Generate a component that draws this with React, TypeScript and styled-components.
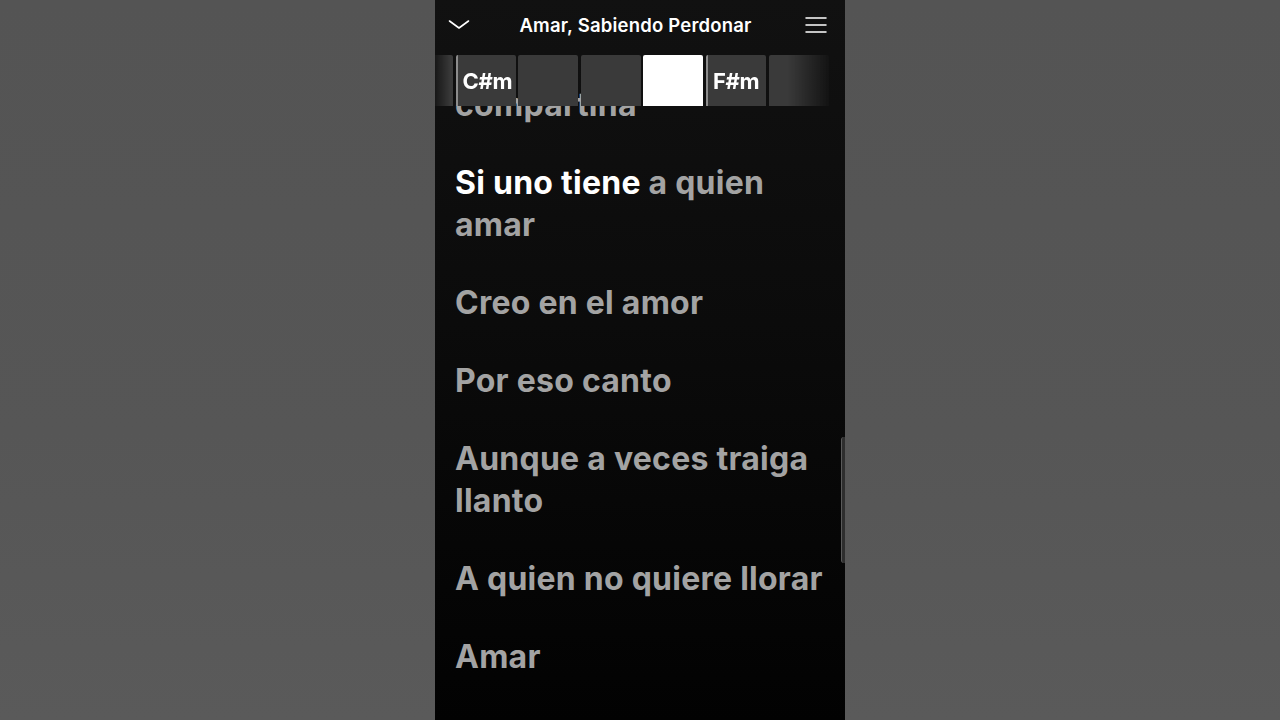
import React from 'react'
import styled, { createGlobalStyle } from 'styled-components'

type Tile = { chord?: string; active?: boolean; start?: boolean }

const tiles: Tile[] = [
    {},
    { chord: 'C#m', start: true },
    {},
    {},
    { active: true },
    { chord: 'F#m', start: true },
    {},
]

type Lyric = { sung?: string; rest: string }

const lyrics: Lyric[] = [
    { rest: 'compartina' },
    { sung: 'Si uno tiene', rest: ' a quien amar' },
    { rest: 'Creo en el amor' },
    { rest: 'Por eso canto' },
    { rest: 'Aunque a veces traiga llanto' },
    { rest: 'A quien no quiere llorar' },
    { rest: 'Amar' },
]

const App: React.FunctionComponent = () => (
    <>
        <GlobalStyle />
        <Page>
            <Phone>
                <Header>
                    <IconButton aria-label="Close">
                        <svg width="22" height="12" viewBox="0 0 22 12" fill="none">
                            <path d="M1.5 2 L11 9 L20.5 2" stroke="#fff" strokeWidth="1.6" strokeLinecap="round" strokeLinejoin="round" />
                        </svg>
                    </IconButton>
                    <Title>Amar, Sabiendo Perdonar</Title>
                    <IconButton aria-label="Menu">
                        <svg width="22" height="18" viewBox="0 0 22 18" fill="none">
                            <path d="M1 2h20M1 9h20M1 16h20" stroke="#fff" strokeWidth="1.5" strokeLinecap="round" />
                        </svg>
                    </IconButton>
                </Header>
                <Body>
                    <LyricList>
                        { lyrics.map((line, index) => (
                            <LyricLine key={ index }>
                                { line.sung && <Sung>{ line.sung }</Sung> }
                                { line.rest }
                            </LyricLine>
                        )) }
                    </LyricList>
                    <ChordStrip>
                        { tiles.map((tile, index) => (
                            <ChordTile key={ index } $active={ tile.active } $start={ tile.start }>
                                { tile.chord }
                            </ChordTile>
                        )) }
                    </ChordStrip>
                    <ScrollThumb />
                </Body>
            </Phone>
        </Page>
    </>
)

export default App

const GlobalStyle = createGlobalStyle`
    html, body {
        margin: 0;
        padding: 0;
        background: #555555;
        font-family: Inter, "Liberation Sans", sans-serif;
    }
`

const Page = styled.div`
    height: 720px;
    display: flex;
    justify-content: center;
    background: linear-gradient(180deg, #545454 0%, #565656 60%, #5a5a5a 100%);
`

const Phone = styled.div`
    width: 410px;
    height: 720px;
    display: flex;
    flex-direction: column;
    overflow: hidden;
    background: linear-gradient(180deg, #111111 0%, #0b0b0b 45%, #020202 100%);
`

const Header = styled.div`
    height: 50px;
    flex-shrink: 0;
    display: flex;
    align-items: center;
    justify-content: space-between;
    padding: 0 18px 0 13px;
`

const IconButton = styled.button`
    width: 22px;
    height: 22px;
    padding: 0;
    border: none;
    background: none;
    display: flex;
    align-items: center;
    justify-content: center;
`

const Title = styled.h1`
    margin: 0 4px 0 0;
    color: #ffffff;
    font-size: 18.5px;
    font-weight: 600;
    letter-spacing: 0.2px;
`

const Body = styled.div`
    position: relative;
    flex: 1;
    overflow: hidden;
`

const ChordStrip = styled.div`
    position: absolute;
    top: 5px;
    left: -42px;
    right: -40px;
    height: 51px;
    display: flex;
    gap: 2.6px;
    -webkit-mask-image: linear-gradient(90deg, transparent 38px, #000 58px, #000 395px, transparent 440px);
    mask-image: linear-gradient(90deg, transparent 38px, #000 58px, #000 395px, transparent 440px);
`

const ChordTile = styled.div<{ $active?: boolean; $start?: boolean }>`
    width: 60px;
    flex-shrink: 0;
    box-sizing: border-box;
    border-radius: 2px 2px 0 0;
    background: ${ props => props.$active ? '#ffffff' : '#3a3a3a' };
    border-left: ${ props => props.$start ? '2px solid #8c8c8c' : 'none' };
    display: flex;
    align-items: center;
    padding-left: 5px;
    color: #ffffff;
    font-size: 22px;
    font-weight: 700;
    letter-spacing: -0.3px;
`

const LyricList = styled.div`
    padding: 34px 16px 0 20px;
`

const LyricLine = styled.p`
    margin: 0 0 36px 0;
    color: #a3a3a3;
    font-size: 32px;
    line-height: 42px;
    font-weight: 700;
    letter-spacing: 0.25px;
`

const Sung = styled.span`
    color: #ffffff;
`

const ScrollThumb = styled.div`
    position: absolute;
    right: 0;
    top: 387px;
    width: 4px;
    height: 126px;
    box-sizing: border-box;
    border-radius: 3px 0 0 3px;
    background: #2e2e2e;
    border-left: 1px solid #5a5a5a;
`
